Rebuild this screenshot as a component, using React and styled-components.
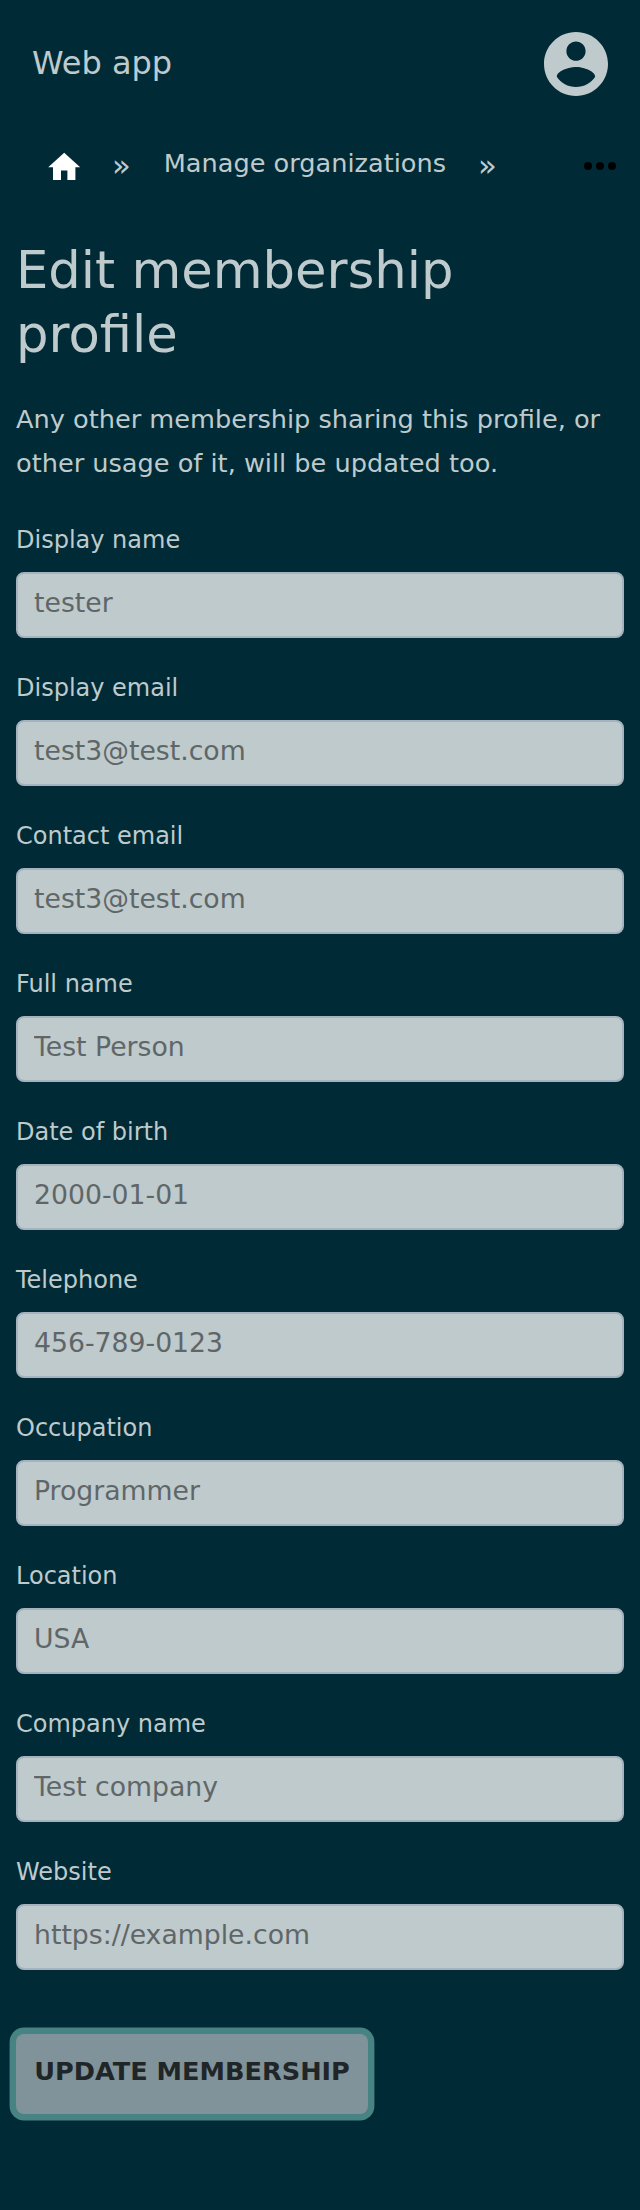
import React from 'react';
import styled, { createGlobalStyle } from 'styled-components';

const GlobalStyle = createGlobalStyle`
  *, *::before, *::after { box-sizing: border-box; }
  body { margin: 0; background: #002b36; color: #bfcacc; font-family: "DejaVu Sans", sans-serif; }
`;
const Page = styled.div`
  min-height: 2210px;
  background: #002b36;
`;
const Header = styled.header`
  height: 128px;
  padding: 0 32px;
  display: flex;
  align-items: center;
  justify-content: space-between;
`;
const Brand = styled.span`
  font-size: 32px;
  line-height: 38px;
  margin-bottom: 2px;
`;
const Avatar = styled.svg`
  width: 64px;
  height: 64px;
  fill: #bfcacc;
`;
const Crumbs = styled.nav`
  height: 76px;
  display: flex;
  align-items: center;
  padding: 0 24px 0 45px;
`;
const HomeIcon = styled.svg`
  width: 38.4px;
  height: 38.4px;
  margin: 1.6px 28.6px 0 0;
  fill: #fff;
`;
const Separator = styled.span`
  font-size: 30.72px;
  line-height: 36px;
  margin-bottom: 3px;
`;
const CrumbText = styled.span`
  font-size: 25.6px;
  line-height: 30px;
  margin: 0 32px 6px 33px;
`;
const More = styled.svg`
  margin-left: auto;
  width: 32px;
  height: 8px;
  fill: #000;
`;
const Main = styled.main`
  padding: 34px 16px 0;
`;
const Title = styled.h1`
  margin: 0;
  font-weight: 400;
  font-size: 51.2px;
  line-height: 64px;
`;
const Intro = styled.p`
  margin: 31px 0 0;
  font-size: 25.6px;
  line-height: 44px;
`;
const Form = styled.form`
  margin-top: 37px;
`;
const Field = styled.label`
  display: block;
  height: 148px;
`;
const Label = styled.span`
  display: block;
  font-size: 24px;
  line-height: 36px;
`;
const Input = styled.input`
  display: block;
  width: 100%;
  height: 66px;
  margin-top: 14px;
  padding: 0 16px 6px;
  border: 2px solid #a5b2bf;
  border-radius: 8px;
  background: #bfcacc;
  color: #5f6668;
  font: 26.7px "DejaVu Sans", sans-serif;
`;
const Button = styled.button`
  display: block;
  height: 80px;
  width: 352px;
  margin: 32px 0 0;
  padding: 0 0 6px;
  border: 0;
  border-radius: 8px;
  background: #80939a;
  box-shadow: 0 0 0 6.4px #488383;
  color: #202628;
  white-space: nowrap;
  font: bold 25.6px "DejaVu Sans", sans-serif;
`;

const fields = [
  ['Display name', 'tester'],
  ['Display email', 'test3@test.com'],
  ['Contact email', 'test3@test.com'],
  ['Full name', 'Test Person'],
  ['Date of birth', '2000-01-01'],
  ['Telephone', '456-789-0123'],
  ['Occupation', 'Programmer'],
  ['Location', 'USA'],
  ['Company name', 'Test company'],
  ['Website', 'https://example.com'],
];

export default function App() {
  return (
    <Page>
      <GlobalStyle />
      <Header>
        <Brand>Web app</Brand>
        <Avatar viewBox="2 2 20 20">
          <path d="M12 2C6.48 2 2 6.48 2 12s4.48 10 10 10 10-4.48 10-10S17.52 2 12 2zm0 3c1.66 0 3 1.34 3 3s-1.34 3-3 3-3-1.34-3-3 1.34-3 3-3zm0 14.2c-2.5 0-4.71-1.28-6-3.22.03-1.99 4-3.08 6-3.08 1.99 0 5.97 1.09 6 3.08-1.29 1.94-3.5 3.22-6 3.22z" />
        </Avatar>
      </Header>
      <Crumbs>
        <HomeIcon viewBox="0 0 24 24"><path d="M10 20v-6h4v6h5v-8h3L12 3 2 12h3v8z" /></HomeIcon>
        <Separator>»</Separator>
        <CrumbText>Manage organizations</CrumbText>
        <Separator>»</Separator>
        <More viewBox="0 0 32 8"><circle cx="4" cy="4" r="4" /><circle cx="16" cy="4" r="4" /><circle cx="28" cy="4" r="4" /></More>
      </Crumbs>
      <Main>
        <Title>Edit membership profile</Title>
        <Intro>Any other membership sharing this profile, or other usage of it, will be updated too.</Intro>
        <Form>
          {fields.map(([label, value]) => (
            <Field key={label}>
              <Label>{label}</Label>
              <Input defaultValue={value} />
            </Field>
          ))}
          <Button type="button">UPDATE MEMBERSHIP</Button>
        </Form>
      </Main>
    </Page>
  );
}
